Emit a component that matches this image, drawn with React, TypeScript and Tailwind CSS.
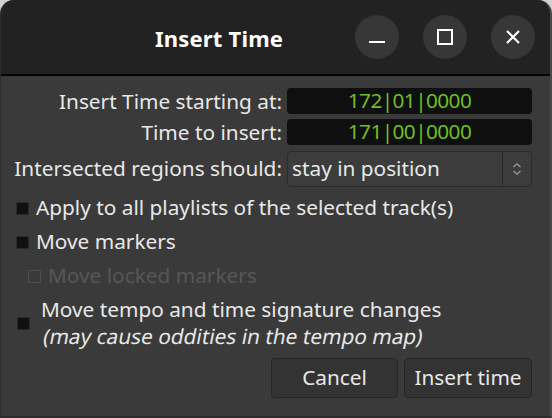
import React from "react";

function Chevrons() {
  return (
    <svg width="12" height="14" viewBox="0 0 12 14" fill="none" stroke="#9a9a9a" strokeWidth="1.3">
      <path d="M2.5 5 L6 1.8 L9.5 5" />
      <path d="M2.5 9 L6 12.2 L9.5 9" />
    </svg>
  );
}

function WinButton({ children }: { children: React.ReactNode }) {
  return (
    <div className="flex size-[44px] items-center justify-center rounded-full bg-[#373737]">
      {children}
    </div>
  );
}

function Box({ disabled = false }: { disabled?: boolean }) {
  return disabled ? (
    <span className="size-[13px] shrink-0 rounded-[1px] border border-[#4f4f4f]" />
  ) : (
    <span className="size-[13px] shrink-0 rounded-[1px] border border-[#2a2a2a] bg-[#101010]" />
  );
}

export default function App() {
  return (
    <div
      className="h-[418px] w-[552px] bg-[#d2d2d2] text-[20.8px] text-[#e8e8e8]"
      style={{ fontFamily: '"Noto Sans", "Open Sans", sans-serif' }}
    >
      <div className="flex h-full flex-col overflow-hidden rounded-t-[14px] border-l border-r-2 border-b-2 border-l-[#2e2e2e] border-r-[#4a4a4a] border-b-[#2c2c2c] bg-[#3a3a3a]">
        {/* title bar */}
        <div className="flex h-[76px] shrink-0 items-center border-b-2 border-black bg-[#222222] pt-[2px]">
          <div className="flex-1 pl-[154px] text-[22px] font-bold tracking-[0.2px] text-white">
            Insert Time
          </div>
          <div className="mb-[2px] flex items-center gap-[24px] pr-[15px]">
            <WinButton>
              <span className="mt-[9px] h-[2px] w-[16px] bg-white" />
            </WinButton>
            <WinButton>
              <span className="size-[16px] border-2 border-white" />
            </WinButton>
            <WinButton>
              <svg width="16" height="16" viewBox="0 0 16 16" stroke="white" strokeWidth="2.2">
                <path d="M2 2 L14 14 M14 2 L2 14" />
              </svg>
            </WinButton>
          </div>
        </div>

        {/* body */}
        <div className="flex flex-1 flex-col pt-[12px] pr-[18px]">
          <div className="grid grid-cols-[1fr_245px] items-center gap-x-[5px] gap-y-[5px] pl-[10px]">
            <span className="text-right leading-[26px]">Insert Time starting at:</span>
            <div className="flex h-[26px] items-center justify-center rounded-[4px] bg-[#0f0f0f] tracking-[-0.6px] text-[#6cbf24]">
              172|01|0000
            </div>
            <span className="text-right leading-[26px]">Time to insert:</span>
            <div className="flex h-[26px] items-center justify-center rounded-[4px] bg-[#0f0f0f] tracking-[-0.6px] text-[#6cbf24]">
              171|00|0000
            </div>
            <span className="mt-[1px] text-right">Intersected regions should:</span>
            <div className="mt-[1px] flex h-[36px] items-center rounded-[4px] border border-[#2b2b2b] bg-[#3c3c3c]">
              <span className="flex-1 pl-[4px]">stay in position</span>
              <span className="flex h-full w-[29px] items-center justify-center border-l border-[#2b2b2b]">
                <Chevrons />
              </span>
            </div>
          </div>

          <div className="mt-[4px] flex flex-col">
            <div className="flex h-[34px] items-center gap-[7px] pl-[15px]">
              <Box />
              <span>Apply to all playlists of the selected track(s)</span>
            </div>
            <div className="flex h-[34px] items-center gap-[7px] pl-[15px]">
              <Box />
              <span>Move markers</span>
            </div>
            <div className="flex h-[34px] items-center gap-[7px] pl-[27px] text-[#575757]">
              <Box disabled />
              <span>Move locked markers</span>
            </div>
            <div className="flex items-center gap-[11px] py-[3px] pl-[16px]">
              <Box />
              <div className="flex flex-col leading-[27px]">
                <span>Move tempo and time signature changes</span>
                <span className="inline-block origin-bottom-left -skew-x-[11deg]">
                  (may cause oddities in the tempo map)
                </span>
              </div>
            </div>
          </div>

          <div className="mt-[5px] flex justify-end gap-[6px]">
            <button className="h-[40px] w-[127px] rounded-[4px] border border-[#252525] bg-[#333333]">
              Cancel
            </button>
            <button className="h-[40px] w-[128px] rounded-[4px] border border-[#252525] bg-[#333333]">
              Insert time
            </button>
          </div>
        </div>
      </div>
    </div>
  );
}
